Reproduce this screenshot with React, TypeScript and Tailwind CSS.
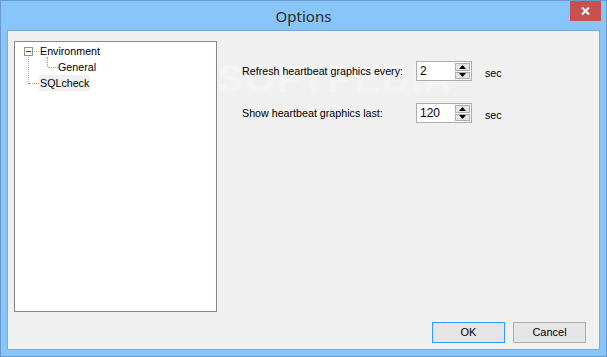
import React from 'react';

const SpinBox: React.FC<{ value: string }> = ({ value }) => (
  <div className="flex h-[20px] w-[56px] border border-[#abadb3] bg-white">
    <div className="flex-1 pl-[3px] pt-[2px] text-[12px] leading-[14px] text-black">{value}</div>
    <div className="my-[1px] mr-[1px] flex w-[15px] flex-col gap-[1px]">
      <div className="flex flex-1 items-center justify-center border border-[#acacac] bg-[#e5e5e5]">
        <svg width="7" height="4" viewBox="0 0 7 4">
          <path d="M3.5 0 L7 4 L0 4 Z" fill="#000" />
        </svg>
      </div>
      <div className="flex flex-1 items-center justify-center border border-[#acacac] bg-[#e5e5e5]">
        <svg width="7" height="4" viewBox="0 0 7 4">
          <path d="M0 0 L7 0 L3.5 4 Z" fill="#000" />
        </svg>
      </div>
    </div>
  </div>
);

const Row: React.FC<{ label: string; value: string }> = ({ label, value }) => (
  <div className="flex h-[20px] items-center">
    <div className="w-[174px] text-[10.7px] text-black">{label}</div>
    <SpinBox value={value} />
    <div className="ml-[13px] mt-[4px] text-[10.7px] text-black">sec</div>
  </div>
);

const Tree: React.FC = () => (
  <div className="relative h-[271px] w-[203px] border border-[#828790] bg-white text-[10.7px] text-black">
    {/* expander box */}
    <div className="absolute left-[9px] top-[5px] flex h-[9px] w-[9px] items-center justify-center border border-[#919191] bg-white">
      <div className="h-[1px] w-[5px] bg-[#1c3f94]" />
    </div>
    {/* dotted connectors */}
    <div className="absolute left-[19px] top-[9px] w-[5px] border-t border-dotted border-[#a0a0a0]" />
    <div className="absolute left-[13px] top-[15px] h-[27px] border-l border-dotted border-[#a0a0a0]" />
    <div className="absolute left-[14px] top-[41px] w-[10px] border-t border-dotted border-[#a0a0a0]" />
    <div className="absolute left-[32px] top-[15px] h-[10px] border-l border-dotted border-[#a0a0a0]" />
    <div className="absolute left-[33px] top-[25px] w-[10px] border-t border-dotted border-[#a0a0a0]" />
    <div className="flex flex-col pl-[24px] pt-[1px] leading-[16px]">
      <div className="px-[1px]">Environment</div>
      <div className="pl-[19px] px-[1px]">General</div>
      <div className="w-fit bg-[#f0f0f0] px-[1px]">SQLcheck</div>
    </div>
  </div>
);

const Button: React.FC<{ label: string; focused?: boolean }> = ({ label, focused }) => (
  <button
    className={
      focused
        ? 'h-[21px] w-[73px] border border-[#3399ff] bg-[#e5e5e5] text-[11px] text-black'
        : 'h-[21px] w-[73px] border border-[#adadad] bg-[#e5e5e5] text-[11px] text-black'
    }
  >
    {label}
  </button>
);

export default function App() {
  return (
    <div
      className="h-[357px] w-[607px] border border-[#6a9ac9] bg-[#88c5f9]"
      style={{ fontFamily: '"Liberation Sans", Arial, sans-serif' }}
    >
      {/* title bar */}
      <div className="relative flex h-[29px] items-center justify-center">
        <span className="mt-[2px] text-[15px] text-[#2b2b2b]" style={{ fontFamily: '"Noto Sans", "Open Sans", sans-serif' }}>
          Options
        </span>
        <div className="absolute right-[5px] top-0 flex h-[20px] w-[31px] items-center justify-center bg-[#c75050]">
          <svg width="9" height="8" viewBox="0 0 9 8">
            <path d="M1 0.5 L8 7.5 M8 0.5 L1 7.5" stroke="#fff" strokeWidth="2" />
          </svg>
        </div>
      </div>
      {/* client */}
      <div className="relative mx-[6px] flex h-[320px] flex-col border border-[#7aa8d8] bg-[#f0f0f0]">
        <div className="pointer-events-none absolute left-[210px] top-[20px] select-none text-[38px] font-bold tracking-[2px] text-white opacity-30">
          SOFTPEDIA
        </div>
        <div className="relative flex flex-1">
          <div className="ml-[6px] mt-[10px]">
            <Tree />
          </div>
          <div className="ml-[25px] mt-[30px] flex flex-col gap-[22px]">
            <Row label="Refresh heartbeat graphics every:" value="2" />
            <Row label="Show heartbeat graphics last:" value="120" />
          </div>
        </div>
        <div className="flex justify-end gap-[8px] pb-[6px] pr-[13px]">
          <Button label="OK" focused />
          <Button label="Cancel" />
        </div>
      </div>
    </div>
  );
}
